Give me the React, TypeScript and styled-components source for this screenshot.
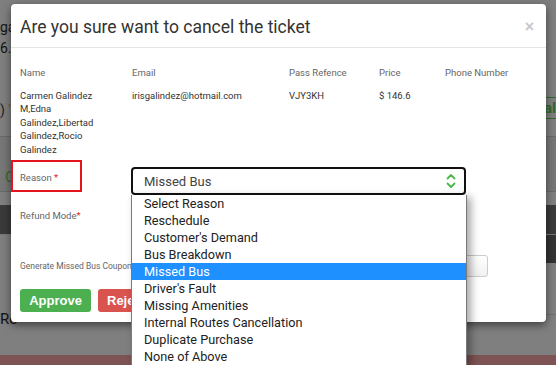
import React from "react";
import styled, { createGlobalStyle } from "styled-components";

const reasons = [
  "Select Reason",
  "Reschedule",
  "Customer's Demand",
  "Bus Breakdown",
  "Missed Bus",
  "Driver's Fault",
  "Missing Amenities",
  "Internal Routes Cancellation",
  "Duplicate Purchase",
  "None of Above",
];

const GlobalStyle = createGlobalStyle`
  html, body {
    margin: 0;
    padding: 0;
    overflow: hidden;
    background: #7f7f7f;
  }
  * {
    box-sizing: border-box;
  }
`;

const Page = styled.div`
  position: relative;
  width: 556px;
  height: 365px;
  overflow: hidden;
  font-family: Roboto, "Liberation Sans", sans-serif;
  background: #7f7f7f;
`;

/* page behind the backdrop, already dimmed */
const Behind = styled.div`
  display: flex;
  flex-direction: column;
  height: 100%;
`;

const BgRow = styled.div<{ $h: number; $bg?: string; $line?: string; $align?: string }>`
  display: flex;
  align-items: ${p => p.$align ?? "center"};
  justify-content: space-between;
  height: ${p => p.$h}px;
  flex: none;
  background: ${p => p.$bg ?? "transparent"};
  border-bottom: ${p => (p.$line ? `1px solid ${p.$line}` : "none")};
  font-size: 14px;
  color: #141414;
`;

const BgText = styled.span<{ $color?: string; $top?: number }>`
  color: ${p => p.$color ?? "#141414"};
  margin-top: ${p => p.$top ?? 0}px;
  white-space: nowrap;
`;

const BgBox = styled.span`
  height: 22px;
  padding: 0 0 0 6px;
  border-top: 1px solid #2d6b2d;
  border-bottom: 1px solid #2d6b2d;
  color: #2d6b2d;
  font-weight: 700;
  font-size: 15px;
  line-height: 20px;
`;

const Modal = styled.div`
  position: absolute;
  left: 11px;
  top: 4px;
  width: 535px;
  height: 318px;
  background: #fff;
  border-radius: 4px;
  box-shadow: 0 3px 9px rgba(0, 0, 0, 0.5);
  display: flex;
  flex-direction: column;
`;

const Header = styled.div`
  display: flex;
  align-items: center;
  justify-content: space-between;
  height: 44px;
  padding: 3px 12px 0 9px;
  border-bottom: 1px solid #e5e5e5;
`;

const Title = styled.h4`
  margin: 0;
  font-size: 17.5px;
  font-weight: 400;
  color: #333;
`;

const Close = styled.span`
  font-size: 16px;
  line-height: 1;
  color: #c8c8c8;
  font-weight: 700;
  font-family: "Liberation Sans", sans-serif;
`;

const Body = styled.div`
  padding: 18px 0 0;
  display: flex;
  flex-direction: column;
`;

const Grid = styled.div`
  display: grid;
  grid-template-columns: 112px 157px 90px 66px 1fr;
  padding-left: 9px;
  font-size: 9.5px;
  color: #555;
  line-height: 13.5px;
`;

const HeadCell = styled.div`
  color: #666;
  padding-bottom: 9px;
`;

const Cell = styled.div`
  color: #333;
  padding-right: 12px;
`;

const FormRow = styled.div<{ $mt: number }>`
  display: flex;
  align-items: flex-start;
  margin-top: ${p => p.$mt}px;
`;

const LabelBox = styled.div`
  width: 120px;
  flex: none;
  padding-left: 9px;
`;

const Marked = styled.div`
  width: 71px;
  height: 32px;
  margin-left: -9px;
  padding: 4px 0 0 7px;
  border: 2px solid #e5141e;
`;

const Label = styled.span<{ $small?: boolean }>`
  font-size: ${p => (p.$small ? 8.5 : 9.5)}px;
  color: #666;
  white-space: nowrap;
`;

const Star = styled.span`
  color: #d9232a;
`;

const SelectWrap = styled.div`
  position: relative;
  width: 335px;
  margin-top: 7px;
`;

const Select = styled.div`
  display: flex;
  align-items: center;
  justify-content: space-between;
  height: 28px;
  padding: 0 8px 0 11px;
  border: 2px solid #111;
  border-radius: 4px;
  font-size: 13px;
  color: #444;
  background: #fff;
`;

const Options = styled.ul`
  position: absolute;
  left: 0;
  top: 28px;
  width: 336px;
  margin: 0;
  padding: 0;
  list-style: none;
  background: #fff;
  border: 1px solid #7a7a7a;
  border-top: none;
  box-shadow: 4px 2px 8px rgba(0, 0, 0, 0.35);
  z-index: 2;
`;

const Option = styled.li<{ $active?: boolean }>`
  height: 17px;
  line-height: 17px;
  padding-left: 12px;
  font-size: 12.7px;
  color: ${p => (p.$active ? "#fff" : "#222")};
  background: ${p => (p.$active ? "#1e90ff" : "transparent")};
  white-space: nowrap;
  overflow: hidden;
`;

const CouponRow = styled.div`
  display: flex;
  align-items: center;
  justify-content: space-between;
  margin-top: 32px;
  padding: 0 58px 0 9px;
`;

const CouponInput = styled.div`
  width: 160px;
  height: 22px;
  border: 1px solid #ccc;
  border-radius: 3px;
  background: linear-gradient(#fff, #f1f1f1);
`;

const Actions = styled.div`
  display: flex;
  gap: 7px;
  margin-top: 12px;
  padding-left: 9px;
`;

const Button = styled.button<{ $kind: "ok" | "no" }>`
  height: 23px;
  width: 71px;
  padding: 0;
  border: none;
  border-radius: 3px;
  background: ${p => (p.$kind === "ok" ? "#4caf50" : "#d9534f")};
  color: #fff;
  font-family: "Liberation Sans", Arial, sans-serif;
  font-weight: 700;
  font-size: 13px;
  text-align: ${p => (p.$kind === "ok" ? "center" : "left")};
  padding-left: ${p => (p.$kind === "ok" ? 0 : 9)}px;
`;

const Chevrons = () => (
  <svg width="10" height="16" viewBox="0 0 10 16" fill="none" stroke="#4cb84c" strokeWidth="1.8" strokeLinecap="round" strokeLinejoin="round">
    <path d="M1.5 5.5 L5 2 L8.5 5.5" />
    <path d="M1.5 10.5 L5 14 L8.5 10.5" />
  </svg>
);

export default function App() {
  return (
    <Page>
      <GlobalStyle />
      <Behind>
        <BgRow $h={35} $align="flex-end">
          <BgText>ga</BgText>
        </BgRow>
        <BgRow $h={25}>
          <BgText>6.</BgText>
        </BgRow>
        <BgRow $h={37} />
        <BgRow $h={40} $line="#6a6a6a" $align="flex-start">
          <BgText $color="#222" $top={5}>
            ) <span style={{ color: "#7a5a10" }}>'</span>
          </BgText>
          <BgBox>al</BgBox>
        </BgRow>
        <BgRow $h={55} $bg="#777" $line="#6a6a6a">
          <BgText $color="#2e6b2e" $top={26} style={{ marginLeft: 5, fontSize: 15 }}>C</BgText>
        </BgRow>
        <BgRow $h={13} />
        <BgRow $h={30} $bg="#3a3a3a" $line="#777" />
        <BgRow $h={28} style={{ background: "linear-gradient(90deg, #7f7f7f 12px, #333 12px)" }} />
        <BgRow $h={52} $line="#707070" $align="flex-start">
          <BgText $top={47} style={{ fontSize: 15 }}>Re</BgText>
        </BgRow>
        <BgRow $h={40} />
        <BgRow $h={10} $bg="#7d5353" />
      </Behind>

      <Modal>
        <Header>
          <Title>Are you sure want to cancel the ticket</Title>
          <Close>×</Close>
        </Header>
        <Body>
          <Grid>
            <HeadCell>Name</HeadCell>
            <HeadCell>Email</HeadCell>
            <HeadCell>Pass Refence</HeadCell>
            <HeadCell>Price</HeadCell>
            <HeadCell>Phone Number</HeadCell>
            <Cell>Carmen Galindez M,Edna Galindez,Libertad Galindez,Rocio Galindez</Cell>
            <Cell>irisgalindez@hotmail.com</Cell>
            <Cell>VJY3KH</Cell>
            <Cell>$ 146.6</Cell>
            <Cell />
          </Grid>

          <FormRow $mt={4}>
            <LabelBox>
              <Marked>
                <Label>
                  Reason <Star>*</Star>
                </Label>
              </Marked>
            </LabelBox>
            <SelectWrap>
              <Select>
                <span>Missed Bus</span>
                <Chevrons />
              </Select>
              <Options>
                {reasons.map(r => (
                  <Option key={r} $active={r === "Missed Bus"}>
                    {r}
                  </Option>
                ))}
              </Options>
            </SelectWrap>
          </FormRow>

          <FormRow $mt={9}>
            <LabelBox>
              <Label>
                Refund Mode<Star>*</Star>
              </Label>
            </LabelBox>
          </FormRow>

          <CouponRow>
            <Label $small>Generate Missed Bus Coupon</Label>
            <CouponInput />
          </CouponRow>

          <Actions>
            <Button $kind="ok">Approve</Button>
            <Button $kind="no">Reject</Button>
          </Actions>
        </Body>
      </Modal>
    </Page>
  );
}
